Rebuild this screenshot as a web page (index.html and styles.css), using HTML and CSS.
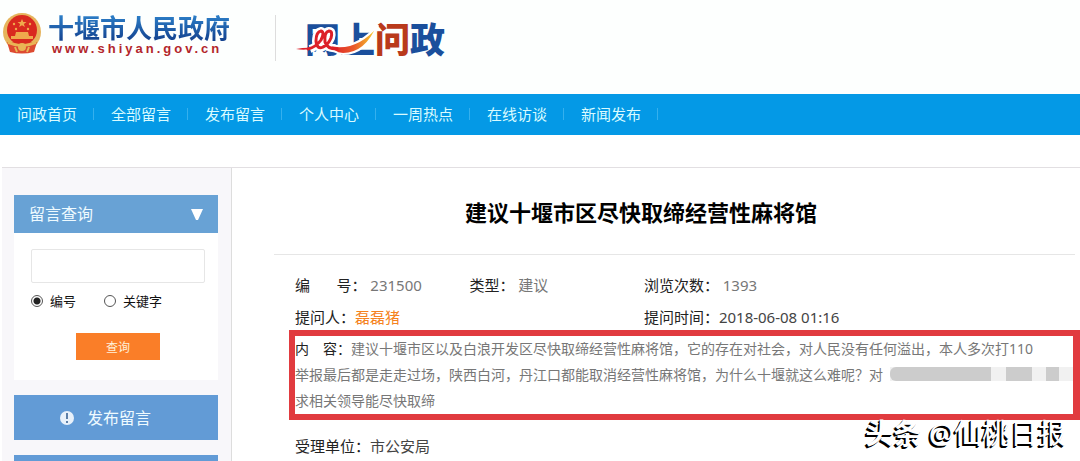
FILE: index.html
```html
<!DOCTYPE html>
<html lang="zh-CN">
<head>
    <meta charset="UTF-8">
    <meta name="viewport" content="width=device-width, initial-scale=1.0">
    <title>网上问政 - 十堰市人民政府</title>
    <link rel="stylesheet" href="styles.css">
</head>
<body>

    <header class="header">
        <a href="#" class="gov">
            <svg class="emblem" viewBox="0 0 40 42" aria-hidden="true">
                <circle cx="20" cy="20" r="19" fill="#e6b45c"/>
                <path d="M5 30L8 40Q20 43 32 40L35 30Z" fill="#dd4a30"/>
                <circle cx="20" cy="18" r="15" fill="#d92a1f"/>
                <path d="M20 7l1.300 3h3.200l-2.600 2 1 3.100-2.900-1.900-2.900 1.900 1-3.100-2.600-2h3.200z" fill="#f0a94c"/>
                <circle cx="12" cy="12" r="1.200" fill="#f0a94c"/>
                <circle cx="14" cy="17" r="1.200" fill="#f0a94c"/>
                <circle cx="26" cy="17" r="1.200" fill="#f0a94c"/>
                <circle cx="28" cy="12" r="1.200" fill="#f0a94c"/>
                <path d="M14 20h12l1 4h4v3H9v-3h4z" fill="#efa94c"/>
                <path d="M5 28Q20 36 35 28L34 32Q20 38 6 32Z" fill="#e9b555"/>
                <circle cx="20" cy="35" r="4" fill="#e9b555"/>
                <path d="M13 35l2 5M27 35l-2 5" stroke="#e9b555" stroke-width="2"/>
            </svg>
            <span class="gov-text">
                <span class="gov-name">十堰市人民政府</span>
                <span class="gov-url">www.shiyan.gov.cn</span>
            </span>
        </a>
        <a href="#" class="wz">
            <span class="wz-blue">网上</span><span class="wz-red">问</span><span class="wz-blue">政</span>
            <svg class="swoosh" viewBox="0 0 84 36" aria-hidden="true">
                <defs>
                    <linearGradient id="sw" x1="0" x2="1">
                        <stop offset="0" stop-color="#dc2028"/>
                        <stop offset="0.500" stop-color="#ea5a2a"/>
                        <stop offset="1" stop-color="#f8e02c"/>
                    </linearGradient>
                </defs>
                <path d="M14 26Q20 24 25 17Q29 9 25 8Q20 9 20 18Q21 27 27 24Q32 22 35 15Q37 8 33 8Q28 9 29 19Q31 26 40 25" fill="none" stroke="#fff" stroke-width="8"/>
                <path d="M0 26Q10 24 17 25Q10 28 0 26Z" fill="#dc2028"/>
                <path d="M34 22Q60 28 82 2Q70 31 47 31Q36 30 34 22Z" fill="url(#sw)" stroke="#fff" stroke-width="2"/>
                <path d="M12 26Q20 24 25 17Q29 9 25 8Q20 9 20 18Q21 27 27 24Q32 22 35 15Q37 8 33 8Q28 9 29 19Q31 26 41 26" fill="none" stroke="#dc2028" stroke-width="3" stroke-linecap="round"/>
            </svg>
        </a>
    </header>

    <nav class="nav">
        <a href="#">问政首页</a>
        <a href="#">全部留言</a>
        <a href="#">发布留言</a>
        <a href="#">个人中心</a>
        <a href="#">一周热点</a>
        <a href="#">在线访谈</a>
        <a href="#">新闻发布</a>
    </nav>

    <div class="page">
        <aside class="sidebar">
            <form class="search">
                <h2>留言查询 <svg viewBox="0 0 12 11" aria-hidden="true"><path d="M0 0h12L7 11H5z" fill="#fff"/></svg></h2>
                <div class="search-body">
                    <input type="text" class="keyword" aria-label="留言查询">
                    <div class="radios">
                        <label><input type="radio" name="type" checked> 编号</label>
                        <label><input type="radio" name="type"> 关键字</label>
                    </div>
                    <button type="button" class="btn">查询</button>
                </div>
            </form>
            <a href="#" class="side-link">
                <svg viewBox="0 0 16 16" aria-hidden="true">
                    <circle cx="8" cy="8" r="7" fill="#e8f1fa"/>
                    <path d="M7 3h2v6H7zM7 11h2v2H7z" fill="#5c7fa8"/>
                </svg>
                发布留言
            </a>
            <a href="#" class="side-link" aria-label="留言"></a>
        </aside>

        <main class="main">
            <h1>建议十堰市区尽快取缔经营性麻将馆</h1>
            <div class="detail">
                <div class="meta">
                    <div>编&emsp;&ensp;&nbsp;号： <span class="value">231500</span></div>
                    <div>类型： <span class="value">建议</span></div>
                    <div>浏览次数： <span class="value">1393</span></div>
                    <div class="asker">提问人：<a href="#">磊磊猪</a></div>
                    <div>提问时间：<span class="time">2018-06-08 01:16</span></div>
                </div>
                <div class="content">
                    <p><span class="label">内&emsp;容：</span>建议十堰市区以及白浪开发区尽快取缔经营性麻将馆，它的存在对社会，对人民没有任何溢出，本人多次打110<br>
                    举报最后都是走走过场，陕西白河，丹江口都能取消经营性麻将馆，为什么十堰就这么难呢？对<br>
                    求相关领导能尽快取缔</p>
                    <div class="mask"><i class="m1"></i><i class="m2"></i><i class="m3"></i></div>
                </div>
                <div class="unit">受理单位：<span class="time">市公安局</span></div>
            </div>
        </main>
    </div>

    <div class="watermark"><b>头条</b> @仙桃日报</div>

</body>
</html>
```

FILE: styles.css
```css
* { box-sizing: border-box; }

body {
    margin: 0;
    position: relative;
    height: 100vh;
    overflow: hidden;
    display: flex;
    flex-direction: column;
    background-color: #fff;
    color: #222;
    font-family: "Noto Sans", "Noto Sans CJK SC", sans-serif;
    font-size: 15px;
    line-height: 24px;
}

a { color: inherit; text-decoration: none; }
h1, h2, p { margin: 0; }

/* Cabecera */
.header {
    flex: none;
    height: 94px;
    display: flex;
    align-items: flex-start;
    padding: 12px 0 0 2px;
    background-color: #fdfffe;
}
.gov {
    display: flex;
    gap: 6px;
    padding-right: 45px;
}
.emblem { width: 40px; height: 42px; }
.gov-text { display: flex; flex-direction: column; }
.gov-name {
    font-family: "Noto Sans CJK SC", sans-serif;
    font-size: 26px;
    line-height: 30px;
    font-weight: bold;
    color: #1e5fae;
    background: linear-gradient(#2f86cf, #123f8c);
    -webkit-background-clip: text;
    background-clip: text;
    -webkit-text-fill-color: transparent;
}
.gov-url {
    padding-left: 4px;
    font-family: "Liberation Sans", sans-serif;
    font-size: 13px;
    line-height: 14px;
    font-weight: bold;
    letter-spacing: 3px;
    color: #b3262b;
}
.wz {
    position: relative;
    margin-top: 3px;
    padding-left: 29px;
    border-left: 1px solid #ddd;
    font-family: "Noto Sans CJK SC", sans-serif;
    font-size: 35px;
    line-height: 46px;
    font-weight: 900;
}
.wz-blue { color: #1a4f9c; }
.wz-red { color: #b93a1b; }
.swoosh {
    position: absolute;
    left: 20px;
    top: 8px;
    width: 84px;
    height: 36px;
}

/* Menú */
.nav {
    flex: none;
    display: flex;
    align-items: center;
    height: 41px;
    padding-bottom: 2px;
    background-color: #0499e6;
    color: #d9fbff;
}
.nav a {
    position: relative;
    padding: 0 17px;
}
.nav a::after {
    content: "";
    position: absolute;
    right: 0;
    top: 6px;
    height: 12px;
    border-right: 1px solid #35b0ee;
}

.page {
    flex: 1;
    display: flex;
    margin: 32px 0 0 2px;
    border-top: 1px solid #e2dfe2;
}

/* Columna izquierda */
.sidebar {
    flex: none;
    width: 230px;
    padding: 27px 13px 0 12px;
    background-color: #f8f7fa;
    border-right: 1px solid #ddd;
}
.search { background-color: #fff; }
.search h2 {
    display: flex;
    align-items: center;
    justify-content: space-between;
    height: 38px;
    padding: 0 15px;
    background-color: #68a2d5;
    color: #eefaff;
    font-size: 16px;
    font-weight: normal;
}
.search h2 svg { width: 12px; height: 11px; }
.search-body { padding: 16px 13px 20px 17px; }
.keyword {
    display: block;
    width: 100%;
    height: 34px;
    border: 1px solid #e6e6e6;
    border-radius: 2px;
    background-color: #fff;
}
.radios {
    display: flex;
    gap: 28px;
    margin-top: 6px;
    font-size: 13px;
    color: #111;
}
.radios label { display: flex; align-items: center; gap: 7px; }
.radios input {
    appearance: none;
    width: 12px;
    height: 12px;
    margin: 0;
    border: 1px solid #555;
    border-radius: 50%;
}
.radios input:checked { background: radial-gradient(circle, #222 0 3px, #fff 4px); }
.btn {
    display: block;
    width: 84px;
    height: 27px;
    margin: 20px auto 0;
    border: none;
    background-color: #fa7e28;
    color: #fff0d8;
    font-family: inherit;
    font-size: 12px;
    cursor: pointer;
}
.side-link {
    display: flex;
    align-items: center;
    gap: 12px;
    height: 45px;
    margin-top: 15px;
    padding-left: 45px;
    background-color: #629bd6;
    color: #eefaff;
    font-size: 16px;
}
.side-link svg { width: 16px; height: 16px; }

/* Contenido */
.main {
    flex: 1;
    padding-left: 42px;
}
.main h1 {
    height: 87px;
    margin-right: 5px;
    padding: 28px 67px 0 0;
    border-bottom: 1px solid #e6e6e6;
    color: #000;
    font-size: 22px;
    line-height: 32px;
    font-weight: bold;
    text-align: center;
}
.detail { padding-left: 15px; }
.meta {
    display: grid;
    grid-template-columns: 2fr 2fr 5fr;
    row-gap: 8px;
    padding: 18px 0 1px 6px;
}
.asker { grid-column: span 2; }
.asker a { color: #f58220; }
.value { color: #777; }
.time { color: #444; }
.content {
    position: relative;
    border: 6px solid #e13b3f;
    border-right-width: 7px;
    color: #777;
    font-size: 14px;
    line-height: 26px;
    white-space: nowrap;
}
.label { color: #222; }
.mask {
    position: absolute;
    top: 31px;
    right: 0;
    display: flex;
    width: 183px;
    height: 14px;
    background-color: #f1f1f1;
}
.mask i { background-color: #ccc; }
.m1 { width: 101px; border-radius: 6px 0 0 6px; }
.m2 { width: 26px; margin-left: 15px; }
.m3 { width: 13px; margin-left: 14px; }
.unit { padding: 14px 0 0 6px; }

.watermark {
    position: absolute;
    right: 14px;
    bottom: 8px;
    color: #fff;
    font-size: 28px;
    line-height: 40px;
    text-shadow: -1px 1px 0 #000, -2px 2px 0 #000;
}
```
